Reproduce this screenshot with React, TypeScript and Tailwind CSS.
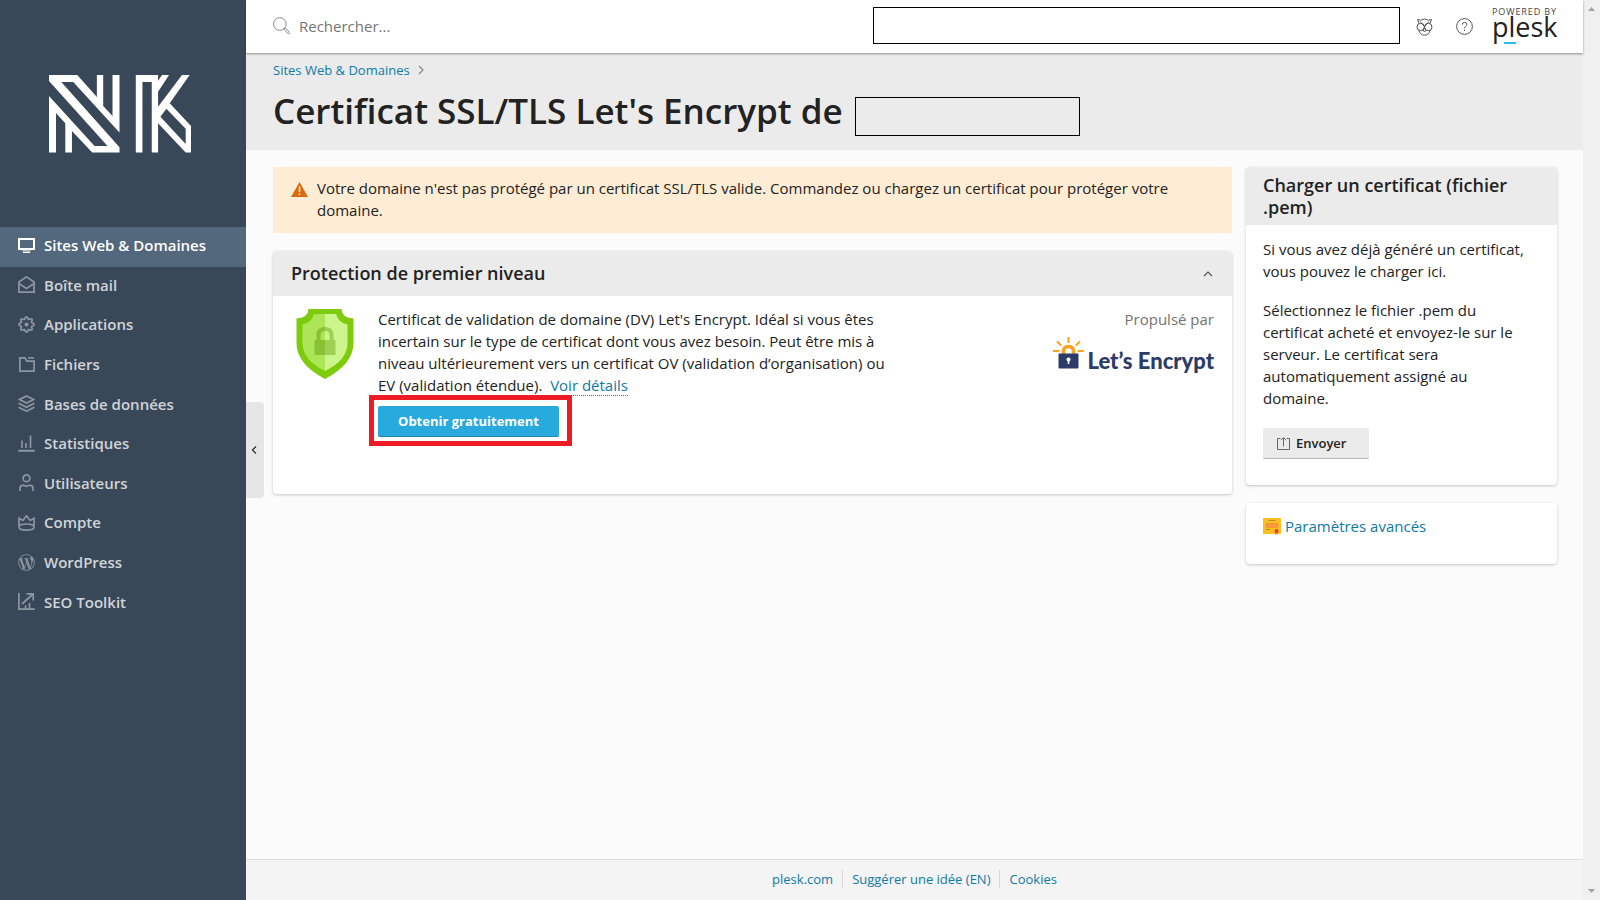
import type { ReactNode } from 'react';
import { FaWordpressSimple } from 'react-icons/fa';

function Icon({ children, size = 17 }: { children: ReactNode; size?: number }) {
  return (
    <svg
      width={size}
      height={size}
      viewBox="0 0 17 17"
      fill="none"
      stroke="currentColor"
      strokeWidth="1.7"
      aria-hidden="true"
      className="shrink-0"
    >
      {children}
    </svg>
  );
}

const gearPath = Array.from({ length: 64 }, (_, i) => {
  const a = (i / 64) * Math.PI * 2;
  const r = 6.6 + 1.1 * Math.cos(a * 8);
  return `${i === 0 ? 'M' : 'L'}${(8.5 + r * Math.cos(a)).toFixed(2)} ${(8.5 + r * Math.sin(a)).toFixed(2)}`;
}).join(' ') + 'Z';

const navItems: { label: string; icon: ReactNode; active?: boolean }[] = [
  {
    label: 'Sites Web & Domaines',
    active: true,
    icon: (
      <Icon>
        <rect x="1" y="2" width="15" height="10" strokeWidth="2" />
        <path d="M4 13.7h9" strokeWidth="1" opacity=".6" />
        <path d="M5 15.3h7" strokeWidth="1.4" />
      </Icon>
    ),
  },
  {
    label: 'Boîte mail',
    icon: (
      <Icon>
        <path d="M.9 6 8.5.9 16.1 6v10.1H.9z" />
        <path d="M.9 7.5 8.5 12.5 16.1 7.5" />
      </Icon>
    ),
  },
  {
    label: 'Applications',
    icon: (
      <Icon>
        <path d={gearPath} />
        <circle cx="8.5" cy="8.5" r="2" fill="currentColor" stroke="none" />
      </Icon>
    ),
  },
  {
    label: 'Fichiers',
    icon: (
      <Icon>
        <path d="M1.9 1.9h5l2 3.2h7.2v10H1.9z" />
        <path d="M10 1.9h6" />
      </Icon>
    ),
  },
  {
    label: 'Bases de données',
    icon: (
      <Icon>
        <path d="M8.5 1 15.5 4.5 8.5 8 1.5 4.5z" />
        <path d="M.6 8.2 8.5 12.2 16.4 8.2M.6 12.2 8.5 16.2 16.4 12.2" />
      </Icon>
    ),
  },
  {
    label: 'Statistiques',
    icon: (
      <Icon>
        <path d="M1 15.7h15" strokeWidth="2" strokeLinecap="round" />
        <path d="M4 13V5.5M8 13V8M12.5 13V.5" />
      </Icon>
    ),
  },
  {
    label: 'Utilisateurs',
    icon: (
      <Icon>
        <circle cx="8.5" cy="4.3" r="3.4" />
        <path d="M2 17v-2.8q0-2.9 2.9-2.9h.7l2.9 1 2.9-1h.7q2.9 0 2.9 2.9V17" />
      </Icon>
    ),
  },
  {
    label: 'Compte',
    icon: (
      <Icon>
        <path d="M1 4.3 4.8 6.5 8.5 1.8 12.2 6.5 16 4.3v9q0 2.8-7.5 2.8T1 13.3z" />
        <path d="M1.5 12q1-2 7-2t7 2" strokeWidth="1.4" />
      </Icon>
    ),
  },
  { label: 'WordPress', icon: <FaWordpressSimple size={17} className="shrink-0" aria-hidden="true" /> },
  {
    label: 'SEO Toolkit',
    icon: (
      <Icon>
        <path d="M.9 0v16.1h16" />
        <path d="M4 11 14.5 1.5M8.5.9h6.7v6.5M7.5 16v-3.5M11.5 16v-6" />
      </Icon>
    ),
  },
];

function NkLogo() {
  return (
    <svg width="142" height="78" viewBox="147 105 427 234" fill="#fff" role="img" aria-label="NK">
      <path d="M147 105H232L291 171V105H310V198L338 228V105H359V278L220 126H184L359 322V338H277L216 273V338H196V250L168 219V338H147V168L284 318H323L147 123Z" />
      <path
        fillRule="evenodd"
        d="M408 105H475V122L487 105H508L475 155V200L547 105H570L510 190 574 258V338H558L475 250V338H456V126H428V338H408ZM500 206 558 266V312L482 230Z"
      />
    </svg>
  );
}

function Sidebar() {
  return (
    <aside className="w-[246px] shrink-0 bg-[#394858]">
      <a href="#" className="flex h-[227px] items-center justify-center pr-[6px]">
        <NkLogo />
      </a>
      <nav>
        <ul className="grid h-[396px] auto-rows-fr">
          {navItems.map((item) => (
            <li key={item.label}>
              <a
                href="#"
                className={
                  item.active
                    ? 'flex h-full items-center gap-[9px] bg-[#53687c] px-[18px] pb-[3px] text-[15px] font-semibold text-white'
                    : 'flex h-full items-center gap-[9px] px-[18px] pb-[3px] text-[15px] font-semibold text-[#d0d4d8]'
                }
              >
                <span className={item.active ? 'text-white' : 'text-[#8b96a1]'}>{item.icon}</span>
                {item.label}
              </a>
            </li>
          ))}
        </ul>
      </nav>
    </aside>
  );
}

function PleskLogo() {
  return (
    <a href="#" className="relative flex h-[35px] w-[66px] flex-col text-[#222]">
      <span className="text-[9px] leading-[5px] tracking-widest whitespace-nowrap text-[#444]">POWERED BY</span>
      <span className="text-[27px] leading-[26px]">plesk</span>
      <span className="absolute bottom-0 left-3 h-[2px] w-[12px] bg-[#28bcec]" />
    </a>
  );
}

function TopBar() {
  return (
    <header className="relative z-10 flex h-[53px] items-center bg-white pr-[25px] pl-[27px] shadow-[0_1px_2px_rgba(0,0,0,0.4)]">
      <label className="flex flex-1 items-center gap-[9px] pb-[2px] text-[#8a8a8a]">
        <svg width="17" height="18" viewBox="0 0 17 18" fill="none" stroke="currentColor" strokeWidth="1" aria-hidden="true">
          <circle cx="6.8" cy="7" r="6.3" />
          <path d="m10.8 12 1.5-1.3 4 4.6q.4 1.5-1.2 1.5z" />
        </svg>
        <input
          type="search"
          placeholder="Rechercher..."
          aria-label="Rechercher"
          className="w-60 bg-transparent text-[15px] outline-none placeholder:text-[#757575]"
        />
      </label>
      <div className="mb-[2px] h-[37px] w-[527px] border border-black" />
      <button type="button" aria-label="Assistant" className="ml-4 text-[#555]">
        <svg width="17" height="18" viewBox="0 0 17 18" fill="none" stroke="currentColor" strokeWidth="1" aria-hidden="true">
          <path d="M1.5 1.5 4.5 2.2Q8.5-.2 12.5 2.2l3-.7L14 5.5M1.5 1.5 3 5.5" />
          <circle cx="4.7" cy="9" r="3.7" />
          <circle cx="12.3" cy="9" r="3.7" />
          <path d="M4 3.5 8.5 8.5 13 3.5M8.5 9.5 7.2 12l1.3 2 1.3-2zM2.8 12.2q1.2 5 5.7 5t5.7-5" />
        </svg>
      </button>
      <button type="button" aria-label="Aide" className="ml-[23px] text-[#555]">
        <svg width="17" height="17" viewBox="0 0 17 17" fill="none" stroke="currentColor" strokeWidth="1" aria-hidden="true">
          <circle cx="8.5" cy="8.5" r="7.9" />
          <path d="M6.2 6.7q0-2.3 2.3-2.3t2.3 2.1q0 1.1-1.3 1.9-1 .6-1 1.9M8.5 11.6v1.4" />
        </svg>
      </button>
      <div className="mb-px ml-[19px]">
        <PleskLogo />
      </div>
    </header>
  );
}

function Shield() {
  return (
    <svg width="58" height="70" viewBox="0 0 58 70" className="shrink-0" aria-hidden="true">
      <path d="M12.5 0H45.5Q46 9 57.5 9.5V34Q57.5 55 29 70 .5 55 .5 34V9.5Q12 9 12.5 0Z" fill="#7ecb0d" />
      <path d="M29 5H40Q42.5 14 51.5 15.5V34Q51.5 51 29 62Z" fill="#cdf58d" />
      <path d="M29 5H18Q15.5 14 6.5 15.5V34Q6.5 51 29 62Z" fill="#ace556" />
      <path d="M18.5 31h2v-5q0-8 8.5-8v4q-4.5 0-4.5 4.5V31H29v15H18.5z" fill="#86c232" />
      <path d="M39.5 31h-2v-5q0-8-8.5-8v4q4.5 0 4.5 4.5V31H29v15h10.5z" fill="#9fd055" />
    </svg>
  );
}

function LetsEncryptLogo() {
  return (
    <div className="flex items-end justify-end">
      <svg width="31" height="32" viewBox="0 0 31 32" className="mr-[3px] mb-[5px] shrink-0" aria-hidden="true">
        <g fill="none" stroke="#fba31c" strokeWidth="2">
          <path d="M15.5 0v6M4 4.5l4.2 4M27 4.5l-4.2 4M0 14h6.5M24.5 14H31" />
          <path d="M10.5 17v-2.5q0-5 5-5t5 5V17" strokeWidth="3.5" />
        </g>
        <rect x="5.5" y="16.5" width="20" height="15" rx="1" fill="#2c3c69" />
        <circle cx="15.5" cy="22.5" r="2" fill="#fff" />
        <path d="M14.7 23h1.6v4h-1.6z" fill="#fff" />
      </svg>
      <span className="font-['Lato',sans-serif] text-[22px] leading-[26px] font-black whitespace-nowrap text-[#2c3c69]">
        Let’s Encrypt
      </span>
    </div>
  );
}

function Warning() {
  return (
    <div role="alert" className="flex gap-[9px] rounded-[2px] bg-[#feedd4] px-[18px] pt-[10px] pb-3">
      <svg width="17" height="15" viewBox="0 0 17 15" className="mt-[5px] shrink-0" aria-hidden="true">
        <path d="M8.5 0 17 15H0z" fill="#d86b10" />
        <path d="M8.5 4.5v5.5M8.5 11.5v1.5" stroke="#feedd4" strokeWidth="1.5" />
      </svg>
      <p>
        Votre domaine n'est pas protégé par un certificat SSL/TLS valide. Commandez ou chargez un certificat pour
        protéger votre domaine.
      </p>
    </div>
  );
}

function ProtectionCard() {
  return (
    <section className="rounded-[4px] bg-white shadow-[0_1px_3px_rgba(0,0,0,0.22)]">
      <div className="flex items-center justify-between rounded-t-[4px] bg-[#ebebeb] px-[18px] py-[11px]">
        <h2 className="text-[18px] leading-[23px] font-semibold">Protection de premier niveau</h2>
        <button type="button" aria-label="Réduire" className="text-[#555]">
          <svg width="12" height="8" viewBox="0 0 12 8" fill="none" stroke="currentColor" strokeWidth="1.2" aria-hidden="true">
            <path d="m2 6 4-4 4 4" />
          </svg>
        </button>
      </div>
      <div className="flex min-h-[198px] px-[18px] pt-3 pb-14">
        <div className="w-[87px] shrink-0 pt-px pl-[5px]">
          <Shield />
        </div>
        <div className="w-[522px]">
          <p>
            Certificat de validation de domaine (DV) Let's Encrypt. Idéal si vous êtes incertain sur le type de
            certificat dont vous avez besoin. Peut être mis à niveau ultérieurement vers un certificat OV (validation
            d’organisation) ou EV (validation étendue).&nbsp;{' '}
            <a href="#" className="border-b border-dotted border-[#0e7aa8] text-[#0e7aa8]">
              Voir détails
            </a>
          </p>
          <div className="relative mt-[10px] w-fit">
            <button
              type="button"
              className="h-[31px] w-[181px] rounded-[2px] border-b border-[#1c82b0] bg-[#28aade] text-[13px] font-bold text-white"
            >
              Obtenir gratuitement
            </button>
            <span className="pointer-events-none absolute -top-[11px] -right-[13px] -bottom-[9px] -left-[9px] border-5 border-[#ed1c24]" />
          </div>
        </div>
        <div className="ml-auto text-right">
          <p className="text-[#737373]">Propulsé par</p>
          <div className="mt-[7px]">
            <LetsEncryptLogo />
          </div>
        </div>
      </div>
    </section>
  );
}

function UploadCard() {
  return (
    <section className="rounded-[4px] bg-white shadow-[0_1px_3px_rgba(0,0,0,0.22)]">
      <h2 className="rounded-t-[4px] bg-[#ebebeb] px-[17px] py-[7px] text-[18px] leading-[22px] font-semibold">
        Charger un certificat (fichier .pem)
      </h2>
      <div className="flex flex-col items-start gap-[17px] px-[17px] pt-[13px] pb-[26px]">
        <p>Si vous avez déjà généré un certificat, vous pouvez le charger ici.</p>
        <p className="pr-2">
          Sélectionnez le fichier .pem du certificat acheté et envoyez-le sur le serveur. Le certificat sera
          automatiquement assigné au domaine.
        </p>
        <button
          type="button"
          className="mt-[2px] flex h-[31px] w-[106px] items-center gap-[6px] rounded-[2px] border-b border-[#b5b5b5] bg-[#ebebeb] pl-[14px] text-[13px] font-semibold"
        >
          <svg width="13" height="13" viewBox="0 0 13 13" fill="none" stroke="#666" strokeWidth="1" aria-hidden="true">
            <path d="M3.5 1.5h-3v11h12v-11h-3M6.5 9.5V.7M4 3.2 6.5.7 9 3.2" />
          </svg>
          Envoyer
        </button>
      </div>
    </section>
  );
}

function AdvancedCard() {
  return (
    <section className="rounded-[4px] bg-white px-[17px] pt-3 pb-[27px] shadow-[0_1px_3px_rgba(0,0,0,0.22)]">
      <a href="#" className="flex items-center gap-1 text-[#0e7aa8]">
        <svg width="18" height="17" viewBox="0 0 18 17" aria-hidden="true">
          <rect width="18" height="16" rx=".5" fill="#fcbf1e" />
          <path d="M5.5 2.5h7M3 11.5h4" stroke="#b98d2c" />
          <rect x="2.5" y="5" width="13" height="5" fill="#f59a3a" />
          <path d="M12 13h3v4l-1.5-1-1.5 1z" fill="#f08a7a" />
          <circle cx="13.5" cy="13" r="2" fill="#d3402a" />
        </svg>
        Paramètres avancés
      </a>
    </section>
  );
}

function Footer() {
  return (
    <footer className="flex h-[41px] items-center justify-center border-t border-[#dedede] bg-[#f4f4f4] pb-[3px] text-[13px] leading-[18px] text-[#0e7aa8]">
      <a href="#" className="px-[9px]">
        plesk.com
      </a>
      <a href="#" className="border-l border-[#d8d8d8] px-[9px]">
        Suggérer une idée (EN)
      </a>
      <a href="#" className="border-l border-[#d8d8d8] px-[9px]">
        Cookies
      </a>
    </footer>
  );
}

export default function App() {
  return (
    <div className="flex min-h-screen bg-[#fbfbfb] font-['Open_Sans',sans-serif] text-[15px] leading-[22px] text-[#222]">
      <Sidebar />
      <div className="relative flex min-w-0 flex-1 flex-col">
        <TopBar />
        <div className="h-[97px] bg-[#ebebeb] px-[27px] pt-2">
          <div className="flex items-center gap-2 text-[13px] leading-[18px] text-[#0e7aa8]">
            <a href="#">Sites Web &amp; Domaines</a>
            <svg width="6" height="10" viewBox="0 0 6 10" fill="none" stroke="#888" strokeWidth="1.2" aria-hidden="true">
              <path d="m1 1 4 4-4 4" />
            </svg>
          </div>
          <div className="mt-[9px] flex items-start gap-3">
            <h1 className="text-[35px] leading-[46px] font-semibold">Certificat SSL/TLS Let's Encrypt de</h1>
            <div className="mt-[9px] h-[39px] w-[225px] border border-black" />
          </div>
        </div>
        <main className="flex flex-1 gap-[14px] pt-[17px] pr-[26px] pl-[27px]">
          <div className="flex flex-1 flex-col gap-[18px]">
            <Warning />
            <ProtectionCard />
          </div>
          <div className="flex w-[311px] shrink-0 flex-col gap-[18px]">
            <UploadCard />
            <AdvancedCard />
          </div>
        </main>
        <Footer />
        <button
          type="button"
          aria-label="Replier le menu"
          className="absolute top-1/2 left-0 flex h-24 w-[18px] -translate-y-1/2 items-center justify-center rounded-r-[4px] bg-[#e6e6e6] pr-[2px] text-[#222]"
        >
          <svg width="6" height="8" viewBox="0 0 6 8" fill="none" stroke="currentColor" strokeWidth="1.2" aria-hidden="true">
            <path d="M5 .5 1.5 4 5 7.5" />
          </svg>
        </button>
      </div>
      <div className="flex w-[17px] shrink-0 flex-col items-center justify-between bg-[#f0f0f0] py-[7px]" aria-hidden="true">
        <svg width="7" height="4" viewBox="0 0 7 4" fill="#a3a3a3">
          <path d="M3.5 0 7 4H0z" />
        </svg>
        <svg width="7" height="4" viewBox="0 0 7 4" fill="#a3a3a3">
          <path d="M3.5 4 7 0H0z" />
        </svg>
      </div>
    </div>
  );
}
